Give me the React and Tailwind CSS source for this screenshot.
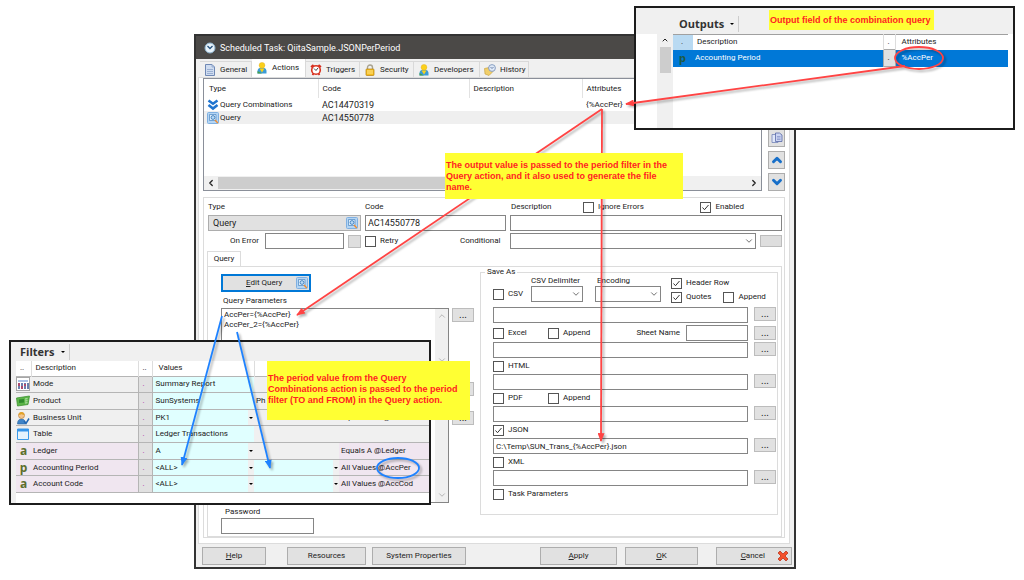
import React, { useState } from 'react';
import { ChevronDown, ChevronLeft, ChevronRight, ChevronUp } from 'lucide-react';

const PageIcon = () => (
  <svg viewBox="0 0 12 12" className="h-3 w-3 shrink-0">
    <path d="M1.5.5h6.500l2.500 2.500v8.500h-9z" fill="#cfdcf0" stroke="#6f88b4" />
    <path d="M8 .5V3h2.500M3 5.500h6M3 7.500h6M3 9.500h6" fill="none" stroke="#8ea4cb" strokeWidth=".8" />
  </svg>
);

const PersonIcon = () => (
  <svg viewBox="0 0 12 12" className="h-3 w-3 shrink-0">
    <path d="M1.500 11.500V9C1.500 6.500 4 5.500 6 5.500s4.500 1 4.500 3.500v2.500z" fill="#3b9bd6" />
    <path d="M1.500 11.500V9L6 11.500z" fill="#47a048" />
    <path d="M3.500 6.500h5L6 10.500z" fill="#f7d21c" />
    <circle cx="6" cy="3.300" r="2.900" fill="#fbd01c" stroke="#e0ac1c" strokeWidth=".4" />
  </svg>
);

const AlarmIcon = () => (
  <svg viewBox="0 0 12 12" className="h-3 w-3 shrink-0">
    <path d="M1 3 3.500 1M11 3 8.500 1M2.500 11l1-1.500M9.500 11l-1-1.500" stroke="#d42a1c" strokeWidth="1.800" />
    <circle cx="6" cy="6" r="4.300" fill="#fff" stroke="#d9321f" strokeWidth="1.600" />
    <path d="M4 4.500 6 6.500 8 4" fill="none" stroke="#444" />
  </svg>
);

const LockIcon = () => (
  <svg viewBox="0 0 12 12" className="h-3 w-3 shrink-0">
    <path d="M3.500 6V3.500a2.500 2.500 0 0 1 5 0V6" fill="none" stroke="#a9a390" strokeWidth="1.400" />
    <rect x="2" y="5" width="8" height="6.500" rx=".8" fill="#f5bd20" stroke="#b57e0c" strokeWidth=".7" />
    <path d="M3 7h6M3 9h6" stroke="#ffe48a" />
  </svg>
);

const HistoryIcon = () => (
  <svg viewBox="0 0 12 12" className="h-3 w-3 shrink-0">
    <path d="M.5 4.500 5 3.500l4 4-4 4-4-1.500z" fill="#f1cf6b" stroke="#c29b34" strokeWidth=".6" />
    <circle cx="8" cy="4" r="3.400" fill="#dfe9f7" stroke="#7d95bb" strokeWidth=".9" />
    <path d="M6.500 3 8 4.500 9.500 3" fill="none" stroke="#4c6694" strokeWidth=".8" />
  </svg>
);

const ClockIcon = () => (
  <svg viewBox="0 0 12 12" className="h-3 w-3 shrink-0">
    <circle cx="6" cy="6" r="5" fill="#e8f3fb" stroke="#8fb4cf" />
    <path d="M3.500 4 6 6.500 8.500 4" fill="none" stroke="#25507c" strokeWidth="1.300" />
  </svg>
);

const QueryIcon = () => (
  <svg viewBox="0 0 12 12" className="h-3 w-3 shrink-0">
    <rect x=".5" y=".5" width="11" height="11" rx="1" fill="#b5d5f3" stroke="#7fb0e2" />
    <path d="M2.500 2.500h6.500v6h-6.500z" fill="#dcecfa" stroke="#4a86c2" strokeWidth=".7" />
    <circle cx="6" cy="5.500" r="1.900" fill="#b7daf7" stroke="#3473b4" strokeWidth=".8" />
    <path d="M8 8l2.800 3" stroke="#ef8b2e" strokeWidth="1.400" />
  </svg>
);

const CombinationIcon = () => (
  <svg viewBox="0 0 12 12" className="h-3 w-3 shrink-0">
    <path d="M1.500 1.500 6 4.700l4.500-3.200M1.500 6 6 9.500 10.500 6" fill="none" stroke="#1f74cf" strokeWidth="2.600" />
  </svg>
);

const CopyIcon = () => (
  <svg viewBox="0 0 12 12" className="h-3 w-3">
    <path d="M1 2.500h6v8H1z" fill="#dfe6f8" stroke="#7484b8" strokeWidth=".8" />
    <path d="M4.500 1h4l2.500 2v6.500H4.500z" fill="#cbd4f2" stroke="#5868a6" strokeWidth=".8" />
    <path d="M6 4.500h3.500M6 6h3.500M6 7.500h3.500" stroke="#7e8dc4" strokeWidth=".7" />
  </svg>
);

const CrossIcon = () => (
  <svg viewBox="0 0 12 12" className="h-3 w-3">
    <path d="M3 1l3 3 3-3 2 2-3 3 3 3-2 2-3-3-3 3-2-2 3-3-3-3z" fill="#f4512c" stroke="#b52a10" strokeWidth=".7" />
  </svg>
);

const ModeIcon = () => (
  <svg viewBox="0 0 14 14" className="block h-3.5 w-3.5">
    <path d="M.5.5h13v13H.5z" fill="#fff" stroke="#555" strokeDasharray="1 1" />
    <path d="M2 3h10v2H2z" fill="#a9c1e6" />
    <path d="M3 6v6M6 6v6M9 6v6M12 6v6" stroke="#3a5593" strokeWidth="1.500" />
    <path d="M3 6v3M6 9v3M9 7v2" stroke="#c43a5a" strokeWidth="1.500" />
  </svg>
);

const ProductIcon = () => (
  <svg viewBox="0 0 14 14" className="block h-3.5 w-3.5">
    <path d="M.5 4l13-2-1.500 8.500L1.500 12z" fill="#5cb548" stroke="#3d9332" strokeWidth=".8" />
    <path d="M3 5.500 8 5v3.500L3 9z" fill="#2f8a2c" />
    <path d="M9 5l2.500-.3M9 7l2.500-.3M9 9l2.500-.3" stroke="#d8f3cf" strokeWidth=".8" />
  </svg>
);

const BusinessIcon = () => (
  <svg viewBox="0 0 14 14" className="block h-3.5 w-3.5">
    <path d="M1.500 13c0-3.500 1.500-5 4-5s4 1.500 4 5z" fill="#3e84c9" stroke="#29619a" strokeWidth=".6" />
    <circle cx="5.500" cy="4.500" r="3" fill="#f3c48b" stroke="#b3772b" strokeWidth=".6" />
    <path d="M2.500 4c0-4 6-4 6 0-2 0-3-1-3-1s-1 1-3 1z" fill="#e2a227" />
    <path d="M8 10l2 2.500L13 7.500" fill="none" stroke="#2267b2" strokeWidth="1.500" />
  </svg>
);

const TableIcon = () => (
  <svg viewBox="0 0 14 14" className="block h-3.5 w-3.5">
    <path d="M1.500 2h11v10.500h-11z" fill="#e5f3fd" stroke="#3a9aea" />
    <path d="M1.500 2h11v2.500h-11z" fill="#3595ea" />
  </svg>
);

const tabs = [
  { name: 'General', icon: <PageIcon />, width: 'w-[52px]' },
  { name: 'Actions', icon: <PersonIcon />, width: 'w-[54px]' },
  { name: 'Triggers', icon: <AlarmIcon />, width: 'w-[54px]' },
  { name: 'Security', icon: <LockIcon />, width: 'w-[54px]' },
  { name: 'Developers', icon: <PersonIcon />, width: 'w-[66px]' },
  { name: 'History', icon: <HistoryIcon />, width: 'w-[49px]' },
];

const filters = [
  { icon: <ModeIcon />, name: 'Mode', value: 'Summary Report', text: '' },
  { icon: <ProductIcon />, name: 'Product', value: 'SunSystems', second: 'Ph', text: '' },
  { icon: <BusinessIcon />, name: 'Business Unit', value: 'PK1', text: 'Equals PK1 @BusUni', arrow: true },
  { icon: <TableIcon />, name: 'Table', value: 'Ledger Transactions', text: '' },
  { icon: 'a', name: 'Ledger', value: 'A', text: 'Equals A @Ledger', arrow: true, pink: true },
  { icon: 'p', name: 'Accounting Period', value: '<ALL>', text: 'All Values @AccPer', arrow: true, pink: true, range: true },
  { icon: 'a', name: 'Account Code', value: '<ALL>', text: 'All Values @AccCod', arrow: true, pink: true, range: true },
];

const Check = ({ label, checked = false, className = '' }) => {
  const [on, setOn] = useState(checked);
  return (
    <label className={`flex items-center gap-1 whitespace-nowrap ${className}`}>
      <span className="grid h-[11px] w-[11px] shrink-0">
        <input
          type="checkbox"
          checked={on}
          onChange={(e) => setOn(e.target.checked)}
          className="col-start-1 row-start-1 h-[11px] w-[11px] appearance-none border border-[#555] bg-white"
        />
        {on && (
          <svg viewBox="0 0 11 11" className="pointer-events-none col-start-1 row-start-1 h-[11px] w-[11px]">
            <path d="M2.500 5.500l2 2.200L8.500 3" fill="none" stroke="#333" />
          </svg>
        )}
      </span>
      {label}
    </label>
  );
};

const Field = ({ label, value = '', className = 'text-[8px]' }) => (
  <input
    type="text"
    aria-label={label}
    defaultValue={value}
    className={`h-4 min-w-0 border border-[#858585] bg-white px-0.5 leading-3 ${className}`}
  />
);

const Select = ({ label, className = '' }) => (
  <span className={`grid h-4 items-center ${className}`}>
    <select aria-label={label} className="col-start-1 row-start-1 h-4 w-full appearance-none border border-[#858585] bg-white">
      <option></option>
    </select>
    <ChevronDown className="pointer-events-none col-start-1 row-start-1 mr-0.5 h-2.5 w-2.5 justify-self-end text-[#555]" />
  </span>
);

const Dots = ({ label }) => (
  <button type="button" aria-label={label} className="h-3.5 w-[22px] shrink-0 border border-[#bcbcbc] bg-[#e1e1e1] text-[10px] leading-3">
    ...
  </button>
);

const FileRow = ({ label, value }) => (
  <div className="flex gap-1.5">
    <Field label={label} value={value} className="flex-1 text-[8px]" />
    <Dots label={`Browse ${label}`} />
  </div>
);

const FooterButton = ({ children, className }) => (
  <button type="button" className={`h-[18px] border border-[#adadad] bg-[#e1e1e1] leading-3 ${className}`}>
    {children}
  </button>
);

const SideButton = ({ label, children }) => (
  <button type="button" aria-label={label} className="flex h-[18px] w-[17px] items-center justify-center border border-[#adadad] bg-[#e1e1e1]">
    {children}
  </button>
);

const ActionList = () => (
  <div className="flex gap-1.5">
    <div className="flex h-[113px] flex-1 flex-col justify-between border border-[#8a8f99] bg-white">
      <table className="w-full table-fixed text-left">
        <thead>
          <tr className="h-[19px]">
            <th className="w-[114px] border-r border-[#e2e2e2] pl-[5px] font-normal">Type</th>
            <th className="w-[151px] border-r border-[#e2e2e2] pl-1 font-normal">Code</th>
            <th className="w-[113px] border-r border-[#e2e2e2] pl-1 font-normal">Description</th>
            <th className="pl-1 font-normal">Attributes</th>
          </tr>
        </thead>
        <tbody>
          <tr className="h-[13px]">
            <td>
              <div className="flex items-center gap-px pl-[3px]"><CombinationIcon />Query Combinations</div>
            </td>
            <td className="pl-1 text-[9px]">AC14470319</td>
            <td></td>
            <td className="pl-1">{'{%AccPer}'}</td>
          </tr>
          <tr className="h-[13px] bg-[#efefef]">
            <td>
              <div className="flex items-center gap-px pl-[3px]"><QueryIcon />Query</div>
            </td>
            <td className="pl-1 text-[9px]">AC14550778</td>
            <td></td>
            <td></td>
          </tr>
        </tbody>
      </table>
      <div className="flex h-3.5 items-center justify-between bg-[#f0f0f0] px-0.5">
        <ChevronLeft className="h-2.5 w-2.5" strokeWidth={3} />
        <div className="mx-0.5 h-3 w-[430px] bg-[#cdcdcd]"></div>
        <div className="flex-1"></div>
        <ChevronRight className="h-2.5 w-2.5" strokeWidth={3} />
      </div>
    </div>
    <div className="flex flex-col justify-end gap-1">
      <SideButton label="Copy"><CopyIcon /></SideButton>
      <SideButton label="Move up"><ChevronUp className="h-3.5 w-3.5 shrink-0 text-[#176fc9]" strokeWidth={5} /></SideButton>
      <SideButton label="Move down"><ChevronDown className="h-3.5 w-3.5 shrink-0 text-[#176fc9]" strokeWidth={5} /></SideButton>
    </div>
  </div>
);

const ActionFields = () => (
  <div className="flex flex-col pt-[3px] pr-0.5 pl-1">
    <div className="flex h-3 items-center">
      <span className="w-[157px]">Type</span>
      <span className="w-[146px]">Code</span>
      <span className="w-[72px]">Description</span>
      <Check label="Ignore Errors" />
      <Check label="Enabled" checked className="mr-[38px] ml-auto" />
    </div>
    <div className="mt-0.5 flex gap-1">
      <button type="button" className="flex h-4 w-[153px] items-center justify-between border border-[#adadad] bg-[#e1e1e1] pr-0.5 pl-1 text-[9px]">
        Query
        <QueryIcon />
      </button>
      <Field label="Code" value="AC14550778" className="w-[141px] text-[9px]" />
      <Field label="Description" className="flex-1 text-[9px]" />
    </div>
    <div className="mt-0.5 flex items-center gap-1">
      <span className="w-[53px] pr-0.5 text-right">On Error</span>
      <Field label="On Error" className="w-[79px] text-[9px]" />
      <button type="button" aria-label="On Error action" className="h-[13px] w-[13px] border border-[#bcbcbc] bg-[#dedede]"></button>
      <Check label="Retry" className="w-[91px]" />
      <span className="w-[46px]">Conditional</span>
      <Select label="Conditional" className="flex-1" />
      <button type="button" aria-label="Edit condition" className="h-3 w-[22px] border border-[#bcbcbc] bg-[#dedede]"></button>
    </div>
  </div>
);

const QueryColumn = () => (
  <div className="flex w-[266px] shrink-0 flex-col pt-[7px] pl-[13px]">
    <button type="button" className="flex h-[18px] w-[90px] items-center justify-between border-2 border-[#0078d7] bg-[#e1e1e1] pr-px pl-[23px]">
      <span><u>E</u>dit Query</span>
      <QueryIcon />
    </button>
    <label htmlFor="params" className="mt-[3px] pl-0.5">Query Parameters</label>
    <div className="mt-px flex gap-[3px]">
      <div className="flex h-[195px] flex-1 border border-[#858585] bg-white">
        <textarea
          id="params"
          defaultValue={'AccPer={%AccPer}\nAccPer_2={%AccPer}'}
          className="min-w-0 flex-1 resize-none overflow-hidden px-0.5 py-px leading-[10px]"
        />
        <div className="flex w-[13px] flex-col items-center justify-between bg-[#f0f0f0] py-0.5">
          <ChevronUp className="h-2.5 w-2.5 text-[#aaa]" />
          <ChevronDown className="mt-[34px] mb-auto h-2.5 w-2.5 text-[#aaa]" />
          <ChevronDown className="h-2.5 w-2.5 text-[#aaa]" />
        </div>
      </div>
      <div className="flex flex-col">
        <Dots label="Edit parameters" />
        <div className="mt-[60px] flex flex-col gap-[15px]">
          <Dots label="Edit from" />
          <Dots label="Edit to" />
        </div>
      </div>
    </div>
    <label htmlFor="password" className="mt-[3px] pl-1">Password</label>
    <input id="password" type="password" className="h-4 w-[93px] border border-[#858585] bg-white" />
  </div>
);

const SaveAs = () => (
  <fieldset className="mt-px mr-[3px] ml-1.5 h-[247px] min-w-0 flex-1 border border-[#dcdcdc] pr-px pl-3">
    <legend className="-ml-2 px-0.5 leading-2">Save As</legend>
    <div className="flex h-[26px] gap-2.5">
      <Check label="CSV" className="mt-2.5 h-4 w-7" />
      <div className="w-[52px]">
        <div className="whitespace-nowrap leading-[10px]">CSV Delimiter</div>
        <Select label="CSV Delimiter" />
      </div>
      <div className="ml-0.5 w-[66px]">
        <div className="pl-0.5 leading-[10px]">Encoding</div>
        <Select label="Encoding" />
      </div>
      <div className="flex flex-col gap-0.5 pt-px">
        <Check label="Header Row" checked />
        <div className="flex gap-3">
          <Check label="Quotes" checked />
          <Check label="Append" />
        </div>
      </div>
    </div>
    <div className="mt-[5px]"><FileRow label="CSV file" /></div>
    <div className="mt-0.5 flex h-4 items-center gap-1.5">
      <Check label="Excel" className="w-[49px]" />
      <Check label="Append" />
      <span className="ml-auto">Sheet Name</span>
      <Field label="Sheet Name" className="w-[62px]" />
      <Dots label="Browse sheet" />
    </div>
    <div className="mt-px"><FileRow label="Excel file" /></div>
    <Check label="HTML" className="h-4" />
    <FileRow label="HTML file" />
    <div className="flex h-4 items-center gap-1.5">
      <Check label="PDF" className="w-[49px]" />
      <Check label="Append" />
    </div>
    <FileRow label="PDF file" />
    <Check label="JSON" checked className="h-4" />
    <FileRow label="JSON file" value="C:\Temp\SUN_Trans_{%AccPer}.json" />
    <Check label="XML" className="h-4" />
    <FileRow label="XML file" />
    <Check label="Task Parameters" className="h-4" />
  </fieldset>
);

const TaskDialog = () => (
  <main className="mr-[228px] ml-[194px] border-2 border-[#333] bg-[#f0f0f0]">
    <header className="flex h-[23px] items-center gap-1 bg-[#4b4947] pl-2 text-[9px] text-white">
      <ClockIcon />
      Scheduled Task: QiitaSample.JSONPerPeriod
    </header>
    <nav className="flex h-[18px] items-end pl-1">
      {tabs.map((tab) => (
        <button
          key={tab.name}
          type="button"
          className={`flex items-center gap-1 border-r border-[#d9d9d9] pl-1 leading-3 ${tab.width} ${
            tab.name === 'Actions' ? 'h-[18px] bg-white' : 'h-4 border-t bg-[#f0f0f0]'
          }`}
        >
          {tab.icon}
          {tab.name}
        </button>
      ))}
    </nav>
    <div className="mr-1 ml-0.5 border border-[#dcdcdc] bg-white pr-1 pb-[5px] pl-1">
      <ActionList />
      <section className="mt-1.5 border border-[#dcdcdc]">
        <ActionFields />
        <div className="ml-[3px]">
          <button type="button" className="mt-0.5 block h-[15px] w-[34px] border border-b-0 border-[#dcdcdc] bg-white leading-3">Query</button>
          <div className="mr-0.5 flex border border-[#dcdcdc] pb-0.5">
            <QueryColumn />
            <SaveAs />
          </div>
        </div>
      </section>
    </div>
    <footer className="flex items-center pt-[3px] pr-0.5 pb-0.5 pl-1.5">
      <FooterButton className="w-16"><u>H</u>elp</FooterButton>
      <FooterButton className="ml-[21px] w-[79px]">Resources</FooterButton>
      <FooterButton className="ml-1.5 w-[94px]">System Properties</FooterButton>
      <FooterButton className="ml-auto w-[77px]"><u>A</u>pply</FooterButton>
      <FooterButton className="ml-2 w-[73px]"><u>O</u>K</FooterButton>
      <FooterButton className="ml-[18px] flex w-[76px] items-center justify-end gap-3 pr-0.5">
        <span><u>C</u>ancel</span>
        <CrossIcon />
      </FooterButton>
    </footer>
  </main>
);

const PanelTitle = ({ children }) => (
  <h2 className="flex w-fit items-center gap-1.5 border-r border-[#ccc] pr-1 font-['Open_Sans',sans-serif] text-[11px] leading-4 font-bold text-[#333]">
    {children}
    <span className="border-x-2 border-t-2 border-x-transparent border-t-black"></span>
  </h2>
);

const OutputsPanel = () => (
  <section className="absolute top-1.5 right-[9px] left-[634px] h-[124px] border-2 border-[#1c1c1c] bg-white">
    <div className="h-[26px] bg-[#f0f0f0] pt-2 pl-[43px]">
      <PanelTitle>Outputs</PanelTitle>
    </div>
    <div className="flex h-[94px]">
      <div className="w-[21px]"></div>
      <div className="flex w-4 flex-col items-center gap-[3px] bg-[#f0f0f0] pt-0.5">
        <ChevronUp className="h-2 w-2" strokeWidth={3} />
        <div className="h-[26px] w-[11px] bg-[#cdcdcd]"></div>
      </div>
      <div className="flex-1 pr-[5px]">
        <table className="w-full table-fixed border-t border-[#a0a0a0] text-left">
          <thead>
            <tr className="h-[15px]">
              <th className="w-5 bg-[#b9daf2] pl-2 font-normal">.</th>
              <th className="pl-1 font-normal">Description</th>
              <th className="w-3 border-l border-[#ddd] pl-1 font-normal">.</th>
              <th className="w-[113px] border-l border-[#ddd] pl-1.5 font-normal">Attributes</th>
            </tr>
          </thead>
          <tbody>
            <tr className="h-[17px] bg-[#0078d7] text-white">
              <td className="pl-1.5 font-['Open_Sans',sans-serif] text-[11px] leading-3 font-bold text-[#1d5a45]">p</td>
              <td className="pl-0.5">Accounting Period</td>
              <td className="border border-[#aaa] bg-[#e1e1e1] pl-1 text-black">.</td>
              <td className="pl-1.5">%AccPer</td>
            </tr>
          </tbody>
        </table>
      </div>
    </div>
  </section>
);

const DropArrow = () => (
  <span className="flex h-full w-1.5 items-center justify-center bg-[#f0f0f0]">
    <span className="border-x-2 border-t-2 border-x-transparent border-t-black"></span>
  </span>
);

const FiltersPanel = () => (
  <section className="absolute top-[340px] left-[9px] w-[422px] border-2 border-[#1c1c1c] bg-[#f0f0f0] pl-[5px]">
    <div className="h-[19px] pt-0.5 pl-1">
      <PanelTitle>Filters</PanelTitle>
    </div>
    <div className="bg-white pb-2.5">
      <table className="h-[132px] w-full table-fixed text-left">
        <thead>
          <tr className="h-[15px]">
            <th className="w-[15px] border-r border-[#ddd] pl-1 font-normal">..</th>
            <th className="w-[107px] border-r border-[#ddd] pl-1 font-normal">Description</th>
            <th className="w-3.5 border-r border-[#ddd] pl-1 font-normal">..</th>
            <th className="w-[102px] border-r border-[#ddd] pl-1.5 font-normal">Values</th>
            <th className="w-[85px]"></th>
            <th></th>
          </tr>
        </thead>
        <tbody>
          {filters.map((row) => (
            <tr key={row.name} className={`border-y border-[#b5b5b5] leading-3 ${row.pink ? 'bg-[#f0e6f0]' : 'bg-[#f0f0f0]'}`}>
              <td className="text-center font-['Open_Sans',sans-serif] text-[12px] leading-[14px] font-bold text-[#5c6e2c]">{row.icon}</td>
              <td className="pl-0.5">{row.name}</td>
              <td className="border border-[#b5b5b5] bg-[#e1e1e1] pl-1 text-[#a3a]">.</td>
              <td className="h-px bg-[#e0ffff] pl-[3px]">
                <div className="flex h-full items-center justify-between">
                  <span>{row.value}</span>
                  {row.arrow && <DropArrow />}
                </div>
              </td>
              <td className={`h-px pl-0.5 ${row.range ? 'bg-[#e0ffff]' : 'bg-[#f0f0f0]'}`}>
                <div className="flex h-full items-center justify-between">
                  <span>{row.second}</span>
                  {row.range && <DropArrow />}
                </div>
              </td>
              <td className="pl-0.5 whitespace-nowrap">{row.text}</td>
            </tr>
          ))}
        </tbody>
      </table>
    </div>
  </section>
);

const Note = ({ children, className }) => (
  <p className={`absolute bg-[#ffff33] font-['Liberation_Sans',Arial,sans-serif] text-[9px] font-bold text-[#f22] ${className}`}>
    {children}
  </p>
);

const Arrows = () => (
  <svg className="pointer-events-none absolute inset-0 h-full w-full drop-shadow-[2px_2px_1px_rgba(0,0,0,0.3)]" fill="none" strokeWidth="1.800">
    <defs>
      <marker id="red" viewBox="0 0 10 8" refX="9" refY="4" markerWidth="9" markerHeight="7" markerUnits="userSpaceOnUse" orient="auto">
        <path d="M0 0l10 4-10 4z" fill="#f44" />
      </marker>
      <marker id="blue" viewBox="0 0 10 8" refX="9" refY="4" markerWidth="9" markerHeight="7" markerUnits="userSpaceOnUse" orient="auto">
        <path d="M0 0l10 4-10 4z" fill="#1e82ff" />
      </marker>
    </defs>
    <g stroke="#f44">
      <ellipse cx="919" cy="58" rx="24" ry="11" />
      <path d="M905 66 626 104" markerEnd="url(#red)" />
      <path d="M602 109 297 315" markerEnd="url(#red)" />
      <path d="M602 109 601 441" markerEnd="url(#red)" />
    </g>
    <g stroke="#1e82ff">
      <ellipse cx="398" cy="468" rx="21" ry="10" />
      <path d="M222 316 182 465" markerEnd="url(#blue)" />
      <path d="M237 332 270 468" markerEnd="url(#blue)" />
    </g>
  </svg>
);

const App = () => {
  return (
    <div className="relative min-h-screen bg-white pt-[34px] font-[Roboto,sans-serif] text-[8px] leading-3 text-[#222]">
      <TaskDialog />
      <OutputsPanel />
      <FiltersPanel />
      <Arrows />
      <Note className="top-2.5 left-[769px] h-5 w-[165px] px-px pt-1 leading-3">Output field of the combination query</Note>
      <Note className="top-[153px] left-[445px] h-[46px] w-[238px] px-px pt-[7px] leading-[11px]">
        The output value is passed to the period filter in the Query action, and it also used to generate the file name.
      </Note>
      <Note className="top-[361px] left-[267px] h-[59px] w-[203px] px-px pt-3 leading-[11px]">
        The period value from the Query Combinations action is passed to the period filter (TO and FROM) in the Query action.
      </Note>
    </div>
  );
};

export default App;
